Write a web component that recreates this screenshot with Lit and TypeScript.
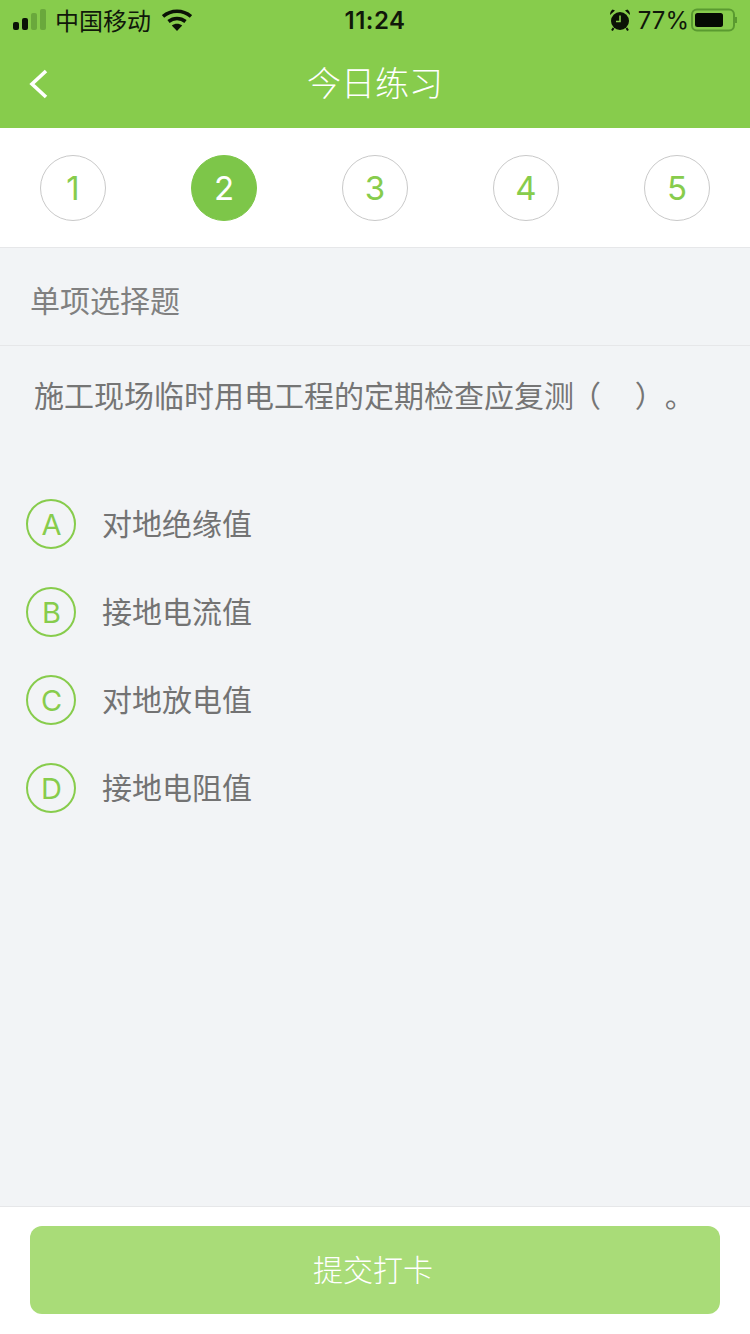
import { LitElement, css, html } from "lit";
import { customElement } from "lit/decorators.js";

const STEPS = ["1", "2", "3", "4", "5"];
const OPTIONS = [
  { key: "A", text: "对地绝缘值" },
  { key: "B", text: "接地电流值" },
  { key: "C", text: "对地放电值" },
  { key: "D", text: "接地电阻值" },
];

@customElement("app-root")
export class AppRoot extends LitElement {
  static override styles = css`
    :host {
      display: flex;
      flex-direction: column;
      width: 750px;
      height: 1334px;
      overflow: hidden;
      background: #f2f4f6;
      font-family: "Inter", "Noto Sans CJK SC", sans-serif;
    }
    .header {
      background: #87cc4c;
      height: 128px;
      flex: none;
    }
    .status {
      height: 40px;
      position: relative;
      display: flex;
      align-items: center;
      color: #10180a;
      font-size: 24px;
    }
    .signal {
      display: flex;
      align-items: flex-end;
      gap: 3px;
      margin-left: 13px;
      height: 21px;
      margin-top: -1px;
    }
    .signal i {
      display: block;
      width: 6px;
      border-radius: 2px;
      background: #0b1206;
    }
    .signal i.dim {
      background: #6aa83c;
    }
    .carrier {
      margin-left: 9px;
      margin-top: -2px;
      font-family: "Noto Sans CJK SC", sans-serif;
      font-size: 24px;
    }
    .wifi {
      margin-left: 11px;
    }
    .time {
      position: absolute;
      left: 0;
      right: 0;
      top: 1px;
      line-height: 40px;
      text-align: center;
      font-weight: 600;
      font-size: 24px;
      letter-spacing: 0.5px;
    }
    .status-right {
      margin-left: auto;
      margin-right: 13px;
      display: flex;
      align-items: center;
    }
    .pct {
      margin-left: 7px;
      margin-top: 1px;
      font-size: 24px;
    }
    .battery {
      margin-left: 2px;
    }
    .nav {
      height: 88px;
      position: relative;
      display: flex;
      align-items: center;
      justify-content: center;
      color: #fff;
      font-family: "Noto Sans CJK SC", sans-serif;
      font-size: 34px;
      font-weight: 300;
    }
    .back {
      position: absolute;
      left: 28px;
      top: 28px;
    }
    .title {
      margin-top: -6px;
    }
    .steps {
      flex: none;
      height: 120px;
      box-sizing: border-box;
      padding: 27px 40px 0;
      background: #fff;
      border-bottom: 1px solid #e6e7e9;
      display: flex;
      justify-content: space-between;
    }
    .step {
      width: 66px;
      height: 66px;
      box-sizing: border-box;
      border: 1px solid #c9c9c9;
      border-radius: 50%;
      display: flex;
      align-items: center;
      justify-content: center;
      color: #87cc4c;
      font-size: 33px;
      font-weight: 400;
    }
    .step.active {
      background: #7dc649;
      border-color: #7dc649;
      color: #fff;
    }
    .type {
      flex: none;
      height: 98px;
      box-sizing: border-box;
      padding-left: 30px;
      padding-top: 4px;
      display: flex;
      align-items: center;
      border-bottom: 1px solid #e6e7e9;
      color: #808080;
      font-size: 30px;
      font-weight: 400;
    }
    .question {
      padding: 26px 0 0 34px;
      height: 86px;
      color: #757575;
      font-size: 30px;
      line-height: 48px;
      font-weight: 400;
      white-space: pre;
      text-spacing-trim: space-all;
    }
    .blank {
      margin-left: -3px;
    }
    .options {
      display: flex;
      flex-direction: column;
      gap: 38px;
      padding: 41px 0 0 26px;
      flex: 1;
    }
    .option {
      display: flex;
      align-items: center;
      height: 50px;
      color: #737373;
      font-size: 30px;
      font-weight: 400;
    }
    .option-text {
      margin-top: -4px;
    }
    .letter {
      width: 50px;
      height: 50px;
      box-sizing: border-box;
      padding-left: 1px;
      border: 2px solid #87cc4c;
      border-radius: 50%;
      display: flex;
      align-items: center;
      justify-content: center;
      color: #87cc4c;
      font-size: 29px;
      font-weight: 400;
      margin-right: 26px;
    }
    .footer {
      flex: none;
      height: 128px;
      box-sizing: border-box;
      background: #fff;
      border-top: 1px solid #e6e7e9;
      padding: 19px 30px 0;
    }
    .submit {
      height: 88px;
      box-sizing: border-box;
      padding: 0 4px 4px 0;
      border-radius: 12px;
      background: #a9dc78;
      color: #fff;
      display: flex;
      align-items: center;
      justify-content: center;
      font-size: 30px;
      font-weight: 300;
    }
  `;

  override render() {
    return html`
      <div class="header">
        <div class="status">
          <div class="signal">
            <i style="height:8px"></i>
            <i style="height:12px"></i>
            <i class="dim" style="height:17px"></i>
            <i class="dim" style="height:21px"></i>
          </div>
          <span class="carrier">中国移动</span>
          <svg class="wifi" width="30" height="22" viewBox="0 0 30 22">
            <path
              d="M1 7.5C9 .5 21 .5 29 7.5"
              fill="none"
              stroke="#0b1206"
              stroke-width="3.6"
            />
            <path
              d="M6.5 12.5C11.5 8.5 18.5 8.5 23.5 12.5"
              fill="none"
              stroke="#0b1206"
              stroke-width="3.6"
            />
            <path d="M9.8 16.6C13 14 17 14 20.2 16.6L15 22Z" fill="#0b1206" />
          </svg>
          <span class="time">11:24</span>
          <div class="status-right">
            <svg width="22" height="24" viewBox="0 0 22 24">
              <path d="M1 7 6 2.4 3.6 1.4Q1 3 1 7ZM21 7 16 2.4 18.4 1.4Q21 3 21 7Z" fill="#0b1206" />
              <circle cx="11" cy="13" r="9" fill="#0b1206" />
              <path d="M4.5 20 3 22.5M17.5 20 19 22.5" stroke="#0b1206" stroke-width="2" />
              <path d="M11 7.5V13.5H7" fill="none" stroke="#87cc4c" stroke-width="1.6" />
            </svg>
            <span class="pct">77%</span>
            <svg class="battery" width="46" height="24" viewBox="0 0 46 24">
              <rect x="1" y="1.5" width="42" height="21" rx="5" fill="none" stroke="#5a9a30" stroke-width="2" />
              <rect x="4" y="5" width="28" height="14" rx="2.5" fill="#060a03" />
              <path d="M45 9v6" stroke="#5a9a30" stroke-width="2" />
            </svg>
          </div>
        </div>
        <div class="nav">
          <svg class="back" width="22" height="32" viewBox="0 0 22 32">
            <path d="M18 3 4 16 18 29" fill="none" stroke="#fff" stroke-width="3.6" />
          </svg>
          <span class="title">今日练习</span>
        </div>
      </div>
      <div class="steps">
        ${STEPS.map(
          (s) => html`<div class="step ${s === "2" ? "active" : ""}">${s}</div>`
        )}
      </div>
      <div class="type">单项选择题</div>
      <div class="question">施工现场临时用电工程的定期检查应复测<span class="blank">（    ）。</span></div>
      <div class="options">
        ${OPTIONS.map(
          (o) => html`
            <div class="option">
              <span class="letter">${o.key}</span>
              <span class="option-text">${o.text}</span>
            </div>
          `
        )}
      </div>
      <div class="footer">
        <div class="submit">提交打卡</div>
      </div>
    `;
  }
}

declare global {
  interface HTMLElementTagNameMap {
    "app-root": AppRoot;
  }
}
